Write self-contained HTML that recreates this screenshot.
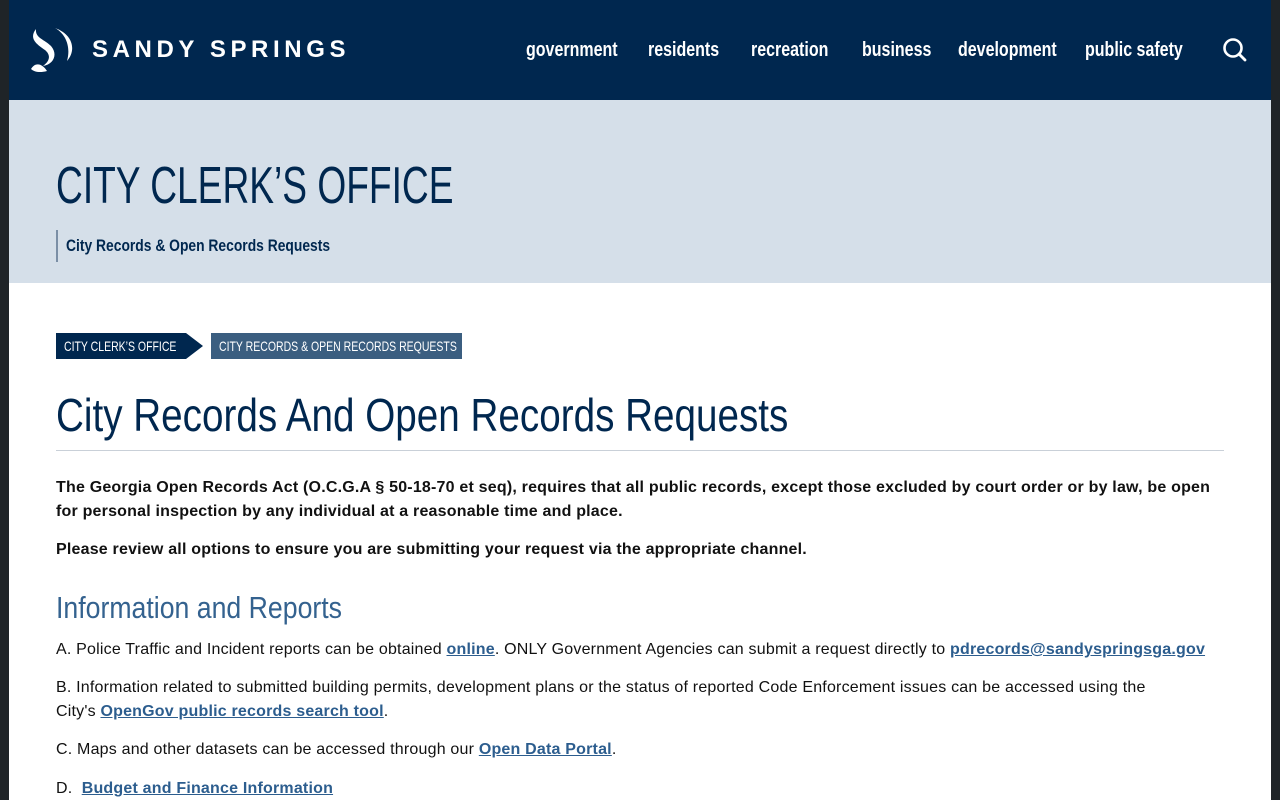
<!DOCTYPE html>
<html><head><meta charset="utf-8"><style>
*{box-sizing:border-box;margin:0;padding:0}
body{width:1280px;height:800px;overflow:hidden;background:#1f2428;font-family:"Liberation Sans",sans-serif;position:relative}
.wrap{position:absolute;left:9px;top:0;width:1262px;height:800px;background:#fff;overflow:hidden}
.hdr{height:100px;background:#00274f;position:relative}
.logo{position:absolute;left:21px;top:27px}
.brand{position:absolute;left:83px;top:36px;color:#fff;font-size:24px;font-weight:bold;letter-spacing:4.6px}
.c{display:inline-block;white-space:nowrap;transform-origin:0 50%}
.nav{position:absolute;top:39px;color:#fff;font-weight:bold;font-size:20px;white-space:nowrap;transform:scaleX(0.8);transform-origin:0 50%}
.hero{height:183px;background:#d5dfe9;position:relative}
.hero h1{position:absolute;left:47px;top:56px;font-weight:normal;font-size:52px;color:#00274f;white-space:nowrap;transform:scaleX(0.714);transform-origin:0 0}
.sub{position:absolute;left:47px;top:130px;border-left:2px solid #7b8fa6;height:32px;padding-left:8px;line-height:32px;font-weight:bold;font-size:17px;color:#00274f;width:400px}
.bc{position:absolute;top:333px;height:26px;line-height:26px;color:#fff;font-size:14px;white-space:nowrap}
h2{position:absolute;left:47px;top:388px;font-weight:normal;font-size:46px;color:#00274f;white-space:nowrap;transform:scaleX(0.84);transform-origin:0 0}
.rule{position:absolute;left:47px;top:450px;width:1168px;height:1px;background:#c9d0d8}
.t{position:absolute;left:47px;font-size:16px;line-height:24px;color:#111;width:1170px;letter-spacing:0.2px}
a{color:#2c5d8e;font-weight:bold;text-decoration:underline}
h3{position:absolute;left:47px;top:590px;font-weight:normal;font-size:31px;color:#34628f;white-space:nowrap;transform:scaleX(0.86);transform-origin:0 0}
</style></head><body><div class="wrap">
<div class="hdr">
<svg class="logo" width="44" height="46" viewBox="0 0 44 46"><path d="M6 2 C-2 12 8 18 15 23 C21 28 20 34 13 39 C24 37 28 27 21 19 C14 12 5 11 6 2Z" fill="#fff"/><path d="M25 1 C36 7 41 20 37 34 C46 24 44 8 25 1Z" fill="#fff"/><path d="M1 42 C5 35 12 36 17 44 C10 46 4 45 1 42Z" fill="#fff"/></svg>
<div class="brand">SANDY SPRINGS</div>
<div class="nav" style="left:517px">government</div>
<div class="nav" style="left:639px">residents</div>
<div class="nav" style="left:742px">recreation</div>
<div class="nav" style="left:853px">business</div>
<div class="nav" style="left:949px">development</div>
<div class="nav" style="left:1076px">public safety</div>
<svg style="position:absolute;left:1213px;top:37px" width="26" height="26" viewBox="0 0 26 26"><circle cx="11" cy="11" r="8.5" fill="none" stroke="#fff" stroke-width="2.6"/><path d="M17 17 L23 23" stroke="#fff" stroke-width="2.8" stroke-linecap="round"/></svg>
</div>
<div class="hero"><h1>CITY CLERK’S OFFICE</h1><div class="sub"><span class="c" style="transform:scaleX(0.815)">City Records &amp; Open Records Requests</span></div></div>
<div class="bc" style="left:47px;width:147px;background:#00274f;padding-left:8px;clip-path:polygon(0 0,130px 0,147px 50%,130px 100%,0 100%)"><span class="c" style="transform:scaleX(0.75)">CITY CLERK’S OFFICE</span></div>
<div class="bc" style="left:202px;width:251px;background:#3b5e80;padding-left:8px;overflow:hidden"><span class="c" style="transform:scaleX(0.75)">CITY RECORDS &amp; OPEN RECORDS REQUESTS</span></div>
<h2>City Records And Open Records Requests</h2>
<div class="rule"></div>
<div class="t" style="top:476px"><b>The Georgia Open Records Act (O.C.G.A § 50-18-70 et seq), requires that all public records, except those excluded by court order or by law, be open for personal inspection by any individual at a reasonable time and place.</b></div>
<div class="t" style="top:538px"><b>Please review all options to ensure you are submitting your request via the appropriate channel.</b></div>
<h3>Information and Reports</h3>
<div class="t" style="top:638px">A. Police Traffic and Incident reports can be obtained <a>online</a>. ONLY Government Agencies can submit a request directly to <a>pdrecords@sandyspringsga.gov</a></div>
<div class="t" style="top:676px;width:1130px">B. Information related to submitted building permits, development plans or the status of reported Code Enforcement issues can be accessed using the City's <a>OpenGov public records search tool</a>.</div>
<div class="t" style="top:738px">C. Maps and other datasets can be accessed through our <a>Open Data Portal</a>.</div>
<div class="t" style="top:777px">D.&nbsp; <a>Budget and Finance Information</a></div>
</div></body></html>
